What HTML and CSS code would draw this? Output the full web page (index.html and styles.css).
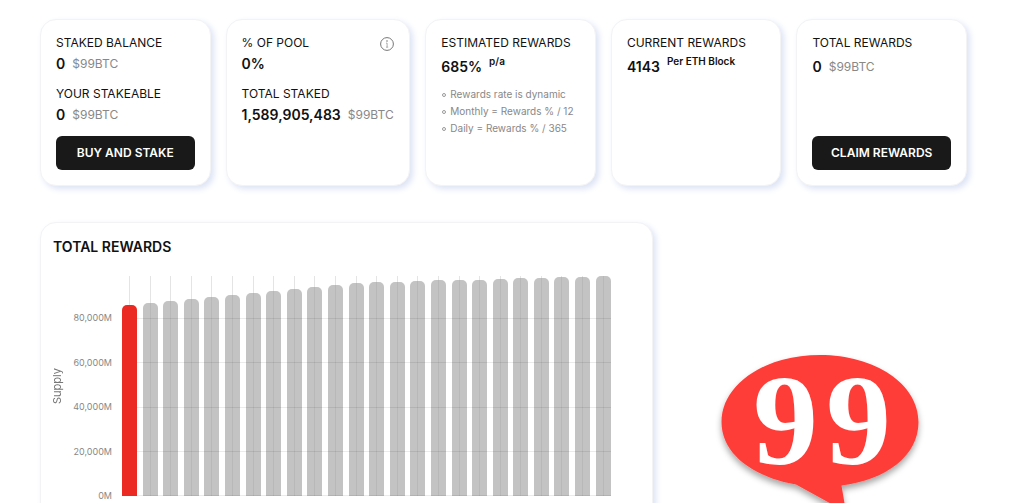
FILE: index.html
```html
<!DOCTYPE html>
<html lang="en">
<head>
<meta charset="utf-8">
<title>99BTC Staking</title>
<link rel="stylesheet" href="styles.css">
</head>
<body>
<main class="page">
  <section class="cards">
    <article class="card">
      <h2 class="label">STAKED BALANCE</h2>
      <p class="value">0 <span class="unit">$99BTC</span></p>
      <h2 class="label label-next">YOUR STAKEABLE</h2>
      <p class="value">0 <span class="unit">$99BTC</span></p>
      <button class="button" type="button">BUY AND STAKE</button>
    </article>
    <article class="card">
      <div class="label-row">
        <h2 class="label">% OF POOL</h2>
        <svg class="info" viewBox="0 0 14 14" role="img" aria-label="Info">
          <circle cx="7" cy="7" r="6.4" fill="none" stroke="#777" stroke-width="1"/>
          <circle cx="7" cy="4" r="0.8" fill="#777"/>
          <path d="M6 6.1H7.1V10M6 10.2H8.2" fill="none" stroke="#999" stroke-width="0.8"/>
        </svg>
      </div>
      <p class="value">0%</p>
      <h2 class="label label-next">TOTAL STAKED</h2>
      <p class="value">1,589,905,483 <span class="unit">$99BTC</span></p>
    </article>
    <article class="card">
      <h2 class="label">ESTIMATED REWARDS</h2>
      <p class="value value-tall">685% <sup class="note">p/a</sup></p>
      <ul class="facts">
        <li>Rewards rate is dynamic</li>
        <li>Monthly = Rewards % / 12</li>
        <li>Daily = Rewards % / 365</li>
      </ul>
    </article>
    <article class="card">
      <h2 class="label">CURRENT REWARDS</h2>
      <p class="value value-tall">4143 <sup class="note">Per ETH Block</sup></p>
    </article>
    <article class="card">
      <h2 class="label">TOTAL REWARDS</h2>
      <p class="value value-tall">0 <span class="unit">$99BTC</span></p>
      <button class="button" type="button">CLAIM REWARDS</button>
    </article>
  </section>

  <section class="lower">
    <article class="card chart-card">
      <h2 class="chart-title">TOTAL REWARDS</h2>
      <div class="chart">
        <div class="axis-name">Supply</div>
        <div class="axis">
          <span>80,000M</span><span>60,000M</span><span>40,000M</span><span>20,000M</span><span>0M</span>
        </div>
        <div class="plot">
          <div class="slot"><div class="bar bar-active" style="height:86.8%"></div></div>
          <div class="slot"><div class="bar" style="height:87.7%"></div></div>
          <div class="slot"><div class="bar" style="height:88.6%"></div></div>
          <div class="slot"><div class="bar" style="height:89.5%"></div></div>
          <div class="slot"><div class="bar" style="height:90.5%"></div></div>
          <div class="slot"><div class="bar" style="height:91.4%"></div></div>
          <div class="slot"><div class="bar" style="height:92.3%"></div></div>
          <div class="slot"><div class="bar" style="height:93.2%"></div></div>
          <div class="slot"><div class="bar" style="height:94.1%"></div></div>
          <div class="slot"><div class="bar" style="height:95%"></div></div>
          <div class="slot"><div class="bar" style="height:95.9%"></div></div>
          <div class="slot"><div class="bar" style="height:96.8%"></div></div>
          <div class="slot"><div class="bar" style="height:97.2%"></div></div>
          <div class="slot"><div class="bar" style="height:97.4%"></div></div>
          <div class="slot"><div class="bar" style="height:97.7%"></div></div>
          <div class="slot"><div class="bar" style="height:98%"></div></div>
          <div class="slot"><div class="bar" style="height:98.2%"></div></div>
          <div class="slot"><div class="bar" style="height:98.4%"></div></div>
          <div class="slot"><div class="bar" style="height:98.6%"></div></div>
          <div class="slot"><div class="bar" style="height:98.9%"></div></div>
          <div class="slot"><div class="bar" style="height:99.1%"></div></div>
          <div class="slot"><div class="bar" style="height:99.4%"></div></div>
          <div class="slot"><div class="bar" style="height:99.7%"></div></div>
          <div class="slot"><div class="bar" style="height:100%"></div></div>
          <div class="lines"><i></i><i></i><i></i><i></i><i></i></div>
        </div>
      </div>
    </article>
    <svg class="logo" viewBox="0 -20 210 190" role="img" aria-label="99">
      <defs>
        <filter id="shade" x="-10%" y="-10%" width="120%" height="120%">
          <feDropShadow dx="0" dy="4" stdDeviation="3" flood-color="#000" flood-opacity="0.35"/>
        </filter>
      </defs>
      <path filter="url(#shade)" fill="#ff3e39" d="M105 3C160 3 203.500 32 203.500 70C203.500 104 171 128 126.500 133.500L131 160L81 132.500C38 125 6.500 102 6.500 70C6.500 32 50 3 105 3Z"/>
      <text class="logo-text" x="38 111" y="112">99</text>
    </svg>
  </section>
</main>
</body>
</html>
```
FILE: styles.css
```css
*,
*::before {
  box-sizing: border-box;
}

body {
  margin: 0;
  background: #fff;
  color: #111;
  font-family: Inter, "Liberation Sans", sans-serif;
}

h2,
p,
ul {
  margin: 0;
  padding: 0;
}

.page {
  padding: 19px 57px 0 40px;
}

.cards {
  display: grid;
  grid-template-columns: 12fr 13fr 12fr 12fr 12fr;
  gap: 15px;
}

.card {
  display: flex;
  flex-direction: column;
  min-width: 0;
  padding: 15px 15px;
  border: 1px solid #f3f3f5;
  border-radius: 16px;
  background: #fff;
  box-shadow: 3px 3px 6px #dce3f4;
}

.cards .card {
  min-height: 167px;
}

.label {
  font-size: 12px;
  font-weight: 400;
  line-height: 16px;
  white-space: nowrap;
}

.label-next {
  margin-top: 14px;
}

.label-row {
  display: flex;
  justify-content: space-between;
  height: 16px;
}

.info {
  width: 14px;
  height: 14px;
  margin-top: 2px;
}

.value {
  display: flex;
  align-items: flex-end;
  gap: 7px;
  margin-top: 5px;
  font-size: 14px;
  font-weight: 600;
  line-height: 16px;
  white-space: nowrap;
}

.value-tall {
  height: 20px;
  margin-top: 4px;
}

.unit {
  color: #888;
  font-size: 12px;
  font-weight: 400;
}

.note {
  align-self: flex-start;
  font-size: 10px;
  line-height: 12px;
}

.facts {
  margin-top: 11px;
  color: #888;
  font-size: 10px;
  line-height: 17px;
  list-style: none;
  white-space: nowrap;
}

.facts li {
  display: flex;
  align-items: center;
  gap: 4px;
}

.facts li::before {
  content: "";
  width: 4px;
  height: 4px;
  margin-left: 1px;
  border: 1px solid #999;
  border-radius: 50%;
}

.button {
  height: 34px;
  margin-top: auto;
  padding: 0;
  border: 0;
  border-radius: 6px;
  background: #191919;
  color: #fff;
  font: 600 12px/16px Inter, "Liberation Sans", sans-serif;
}

.lower {
  display: grid;
  grid-template-columns: minmax(0, 25fr) minmax(0, 12fr);
  gap: 20px;
  margin-top: 36px;
}

.chart-card {
  padding: 16px 41px 48px 9px;
}

.chart-title {
  margin-left: 3px;
  font-size: 14px;
  font-weight: 600;
  line-height: 16px;
}

.chart {
  display: flex;
  height: 220px;
  margin-top: 21px;
}

.axis-name {
  width: 14px;
  color: #777;
  font-size: 11px;
  line-height: 14px;
  text-align: center;
  writing-mode: vertical-rl;
  transform: rotate(180deg);
}

.axis {
  display: flex;
  flex-direction: column;
  justify-content: space-between;
  width: 48px;
  margin: 36px 10px -6px 0;
  color: #888;
  font-size: 9px;
  line-height: 12px;
  text-align: right;
}

.plot {
  position: relative;
  display: flex;
  flex: 1;
  justify-content: space-between;
}

.slot {
  display: flex;
  align-items: flex-end;
  width: 15px;
  background: linear-gradient(#e4e4e4, #e4e4e4) center / 1px 100% no-repeat;
}

.bar {
  width: 100%;
  border-radius: 5px 5px 0 0;
  background: linear-gradient(#b8b8b8, #b8b8b8) center / 1px 100% no-repeat #c3c3c3;
}

.bar-active {
  z-index: 2;
  background: #eb2b23;
}

.lines {
  position: absolute;
  inset: 42px 0 0;
  z-index: 1;
  display: flex;
  flex-direction: column;
  justify-content: space-between;
}

.lines i {
  height: 1px;
  background: rgba(0, 0, 0, 0.08);
}

.logo {
  justify-self: center;
  width: 210px;
  margin-top: 110px;
}

.logo-text {
  fill: #fff;
  font-family: "Liberation Serif", serif;
  font-size: 130px;
  font-weight: 700;
}
```
